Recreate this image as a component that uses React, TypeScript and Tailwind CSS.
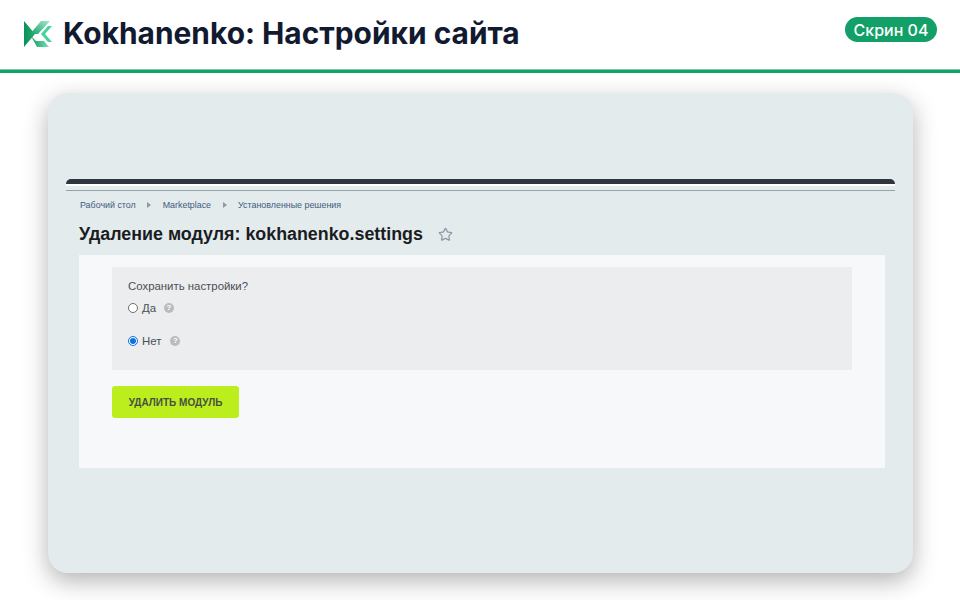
import { Star } from 'lucide-react'

const Logo = () => (
  <svg width="28" height="26" viewBox="0 0 28 26">
    <defs>
      <linearGradient id="kg1" x1="0" y1="0" x2="1" y2="0">
        <stop offset="0" stopColor="#0c8f58" />
        <stop offset="1" stopColor="#1fae72" />
      </linearGradient>
      <linearGradient id="kg2" x1="0" y1="1" x2="1" y2="0">
        <stop offset="0" stopColor="#14a469" />
        <stop offset="1" stopColor="#a5e8c9" />
      </linearGradient>
      <linearGradient id="kg3" x1="0" y1="0" x2="1" y2="0">
        <stop offset="0" stopColor="#0e9a60" />
        <stop offset="1" stopColor="#7fe0b4" />
      </linearGradient>
    </defs>
    <polygon points="0,0 11,13 0,26" fill="url(#kg1)" />
    <polygon points="6,13 17,0 26,0 14,13" fill="url(#kg2)" />
    <polygon points="7,15 13,26 25,26 20,20 12,20" fill="url(#kg3)" />
    <polygon points="17,13 24,5 28,5 21,13 28,21 24,21" fill="#45d39a" />
  </svg>
)

const Hint = () => (
  <span className="w-[10px] h-[10px] rounded-full bg-[#b9bcbf] text-white text-[8px] font-bold leading-[10px] text-center">?</span>
)

const Sep = () => <span className="w-0 h-0 border-y-[3px] border-y-transparent border-l-[4px] border-l-[#8d99a5]" />

export default function App() {
  return (
    <div className="w-[960px] h-[600px] bg-white overflow-hidden font-['Inter',sans-serif]">
      <div className="h-[73px] border-b-[3px] border-[#0fa566] flex items-start justify-between pl-6 pr-[23px] shadow-[inset_0_-1px_0_#7fcaa6]">
        <div className="flex items-center gap-[11px] h-[68px]">
          <Logo />
          <h1 className="text-[29.9px] font-bold text-[#111a30] leading-none">Kokhanenko: Настройки сайта</h1>
        </div>
        <span className="mt-[17px] h-[25px] px-[8px] rounded-full bg-[#12a068] text-white text-[16px] font-medium leading-[27px] w-[92px] text-center">Скрин 04</span>
      </div>

      <div className="mt-[20px] ml-12 w-[865px] h-[480px] rounded-[20px] bg-[#e3ebed] shadow-[0_8px_24px_rgba(0,0,0,0.3)] pt-[86px] pl-[18px] font-['Liberation_Sans',sans-serif]">
        <div className="w-[829px] h-[5px] bg-[#2f363f] rounded-t-[6px]" />
        <div className="w-[829px] h-[2px] bg-white" />
        <div className="w-[829px] h-[1px] mt-[4px] bg-[#9aa3a6]" />

        <div className="ml-[14px] mt-[8px] flex items-center gap-[11.5px] text-[8.9px] leading-[12px] text-[#3f5b7d]">
          <span>Рабочий стол</span>
          <Sep />
          <span>Marketplace</span>
          <Sep />
          <span>Установленные решения</span>
        </div>

        <div className="ml-[13px] mt-[13px] flex items-center gap-[15px]">
          <h2 className="text-[17.85px] leading-[20px] font-bold text-[#1a1c1f]">Удаление модуля: kokhanenko.settings</h2>
          <Star className="w-[15px] h-[15px] text-[#8f99a8]" strokeWidth={2} />
        </div>

        <div className="ml-[13px] mt-[11px] w-[806px] h-[213px] bg-[#f7f8fa] pt-[12px] pl-[33px]">
          <div className="w-[740px] h-[103px] bg-[#ebedee] pl-4 pt-[12px] text-[#4a4f55] text-[11.4px] leading-[14px]">
            <div>Сохранить настройки?</div>
            <div className="mt-[8px] flex items-center">
              <span className="w-[10px] h-[10px] rounded-full border border-[#6b6f74] bg-white" />
              <span className="ml-[4px]">Да</span>
              <span className="ml-[8px] flex"><Hint /></span>
            </div>
            <div className="mt-[19px] flex items-center">
              <span className="w-[10px] h-[10px] rounded-full border-[1.5px] border-[#0f6fe0] bg-white flex items-center justify-center">
                <span className="w-[6px] h-[6px] rounded-full bg-[#0f6fe0]" />
              </span>
              <span className="ml-[4px]">Нет</span>
              <span className="ml-[9px] flex"><Hint /></span>
            </div>
          </div>
          <button className="mt-4 w-[127px] h-[32px] rounded-[3px] bg-[#bbee1c] text-[10px] font-bold text-[#474f45]">УДАЛИТЬ МОДУЛЬ</button>
        </div>
      </div>
    </div>
  )
}
